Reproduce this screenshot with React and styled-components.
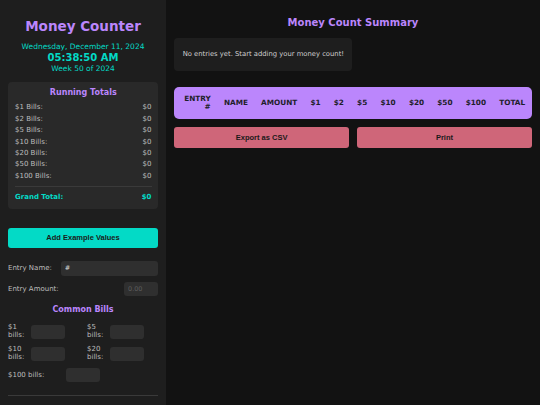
import React from "react"
import styled, { createGlobalStyle } from "styled-components"

const GlobalStyle = createGlobalStyle`
  html, body {
    margin: 0;
    padding: 0;
    background: #121212;
  }
  body {
    font-family: "DejaVu Sans", Verdana, sans-serif;
    color: #e0e0e0;
  }
  * {
    box-sizing: border-box;
  }
`

const Layout = styled.div`
  display: flex;
  width: 100%;
  height: 100vh;
  overflow: hidden;
`

const Sidebar = styled.aside`
  width: 166px;
  flex-shrink: 0;
  padding: 0 8px;
  background: #1e1e1e;
  overflow: hidden;
`

const AppTitle = styled.h1`
  margin: 18px 0 0;
  font-size: 13.5px;
  line-height: 16px;
  font-weight: bold;
  text-align: center;
  color: #bb86fc;
`

const ClockLine = styled.div`
  margin-top: ${(p) => p.$gap || 0}px;
  font-size: ${(p) => (p.$big ? "10px" : "7.5px")};
  font-weight: ${(p) => (p.$big ? "bold" : "normal")};
  line-height: 11px;
  text-align: center;
  color: #03dac6;
`

const TotalsBox = styled.section`
  margin-top: 7.8px;
  padding: 6px 6.5px 6.6px 7px;
  background: #292929;
  border-radius: 4px;
`

const SectionHeading = styled.h2`
  margin: ${(p) => p.$margin || "0 0 4.6px"};
  font-size: 8px;
  line-height: 10px;
  font-weight: bold;
  text-align: center;
  color: #bb86fc;
`

const TotalRow = styled.div`
  display: flex;
  justify-content: space-between;
  font-size: 7px;
  line-height: 11.4px;
  color: #bdbdbd;
`

const GrandRow = styled.div`
  display: flex;
  justify-content: space-between;
  padding-top: 5px;
  font-size: 7px;
  line-height: 10px;
  font-weight: bold;
  color: #03dac6;
`

const Divider = styled.hr`
  margin: ${(p) => p.$margin || "4px 0 0"};
  border: 0;
  border-top: 1px solid #3a3a3a;
`

const ActionButton = styled.button`
  display: block;
  width: 100%;
  height: ${(p) => p.$height || "20.3px"};
  margin-top: ${(p) => p.$top || 0}px;
  border: none;
  border-radius: 3px;
  background: ${(p) => p.$bg || "#03dac6"};
  color: #1a1a1a;
  font-family: "Liberation Sans", Arial, sans-serif;
  font-size: 7.5px;
  font-weight: bold;
`

const FieldRow = styled.div`
  display: flex;
  align-items: center;
  justify-content: ${(p) => (p.$spread ? "space-between" : "flex-start")};
  gap: 9px;
  margin-top: ${(p) => p.$top}px;
`

const FieldLabel = styled.label`
  font-size: 7px;
  line-height: 9px;
  color: #bdbdbd;
  white-space: nowrap;
`

const TextInput = styled.input`
  height: ${(p) => p.$height || "14.7px"};
  width: ${(p) => p.$width || "auto"};
  flex: ${(p) => (p.$grow ? 1 : "none")};
  min-width: 0;
  padding: 0 4px;
  border: none;
  border-radius: 3px;
  background: #2f2f2f;
  color: #dddddd;
  font-family: "DejaVu Sans", Verdana, sans-serif;
  font-size: 6.5px;
  outline: none;
  &::placeholder {
    color: #5c5c5c;
  }
`

const BillsGrid = styled.div`
  display: grid;
  grid-template-columns: 1fr 1fr;
  column-gap: 8px;
  row-gap: 7px;
  margin-top: 9px;
`

const BillItem = styled.div`
  display: grid;
  grid-template-columns: ${(p) => (p.$wide ? "54px" : "19px")} 34px;
  grid-column: ${(p) => (p.$wide ? "1 / -1" : "auto")};
  column-gap: 4px;
  align-items: center;
`

const BillLabel = styled.label`
  font-size: 7px;
  line-height: 7.6px;
  color: #bdbdbd;
`

const Main = styled.main`
  flex: 1;
  padding: 0 8.3px;
  background: #121212;
`

const SummaryTitle = styled.h2`
  margin: 17.3px 0 0;
  font-size: 10px;
  line-height: 12px;
  font-weight: bold;
  text-align: center;
  color: #bb86fc;
`

const EmptyBox = styled.div`
  width: fit-content;
  margin-top: 8.4px;
  padding: 12.5px 8.4px;
  background: #1e1e1e;
  border-radius: 4px;
  font-size: 6.8px;
  line-height: 8px;
  color: #cfcfcf;
`

const SummaryTable = styled.table`
  width: 100%;
  margin-top: 16.6px;
  border-collapse: separate;
  border-spacing: 0;
  background: #bb86fc;
  border-radius: 5px;
`

const HeadCell = styled.th`
  padding: 7.5px 6.6px;
  font-size: 7.3px;
  line-height: 8.4px;
  font-weight: bold;
  text-align: right;
  color: #1e1e2a;
  white-space: ${(p) => (p.$wrap ? "normal" : "nowrap")};
`

const ButtonRow = styled.div`
  display: grid;
  grid-template-columns: 1fr 1fr;
  gap: 8.3px;
  margin-top: 8.3px;
`

const billRows = ["$1", "$2", "$5", "$10", "$20", "$50", "$100"]
const headers = ["NAME", "AMOUNT", "$1", "$2", "$5", "$10", "$20", "$50", "$100", "TOTAL"]

const App = () => {
  return (
    <>
      <GlobalStyle />
      <Layout>
        <Sidebar>
          <AppTitle>Money Counter</AppTitle>
          <ClockLine $gap={7}>Wednesday, December 11, 2024</ClockLine>
          <ClockLine $big>05:38:50 AM</ClockLine>
          <ClockLine>Week 50 of 2024</ClockLine>

          <TotalsBox>
            <SectionHeading>Running Totals</SectionHeading>
            {billRows.map((bill) => (
              <TotalRow key={bill}>
                <span>{bill} Bills:</span>
                <span>$0</span>
              </TotalRow>
            ))}
            <Divider />
            <GrandRow>
              <span>Grand Total:</span>
              <span>$0</span>
            </GrandRow>
          </TotalsBox>

          <ActionButton $top={19}>Add Example Values</ActionButton>

          <FieldRow $top={12.7}>
            <FieldLabel>Entry Name:</FieldLabel>
            <TextInput $grow defaultValue="#" />
          </FieldRow>
          <FieldRow $top={6.3} $spread>
            <FieldLabel>Entry Amount:</FieldLabel>
            <TextInput $width="34px" placeholder="0.00" />
          </FieldRow>

          <SectionHeading $margin="8.6px 0 0">Common Bills</SectionHeading>
          <BillsGrid>
            <BillItem>
              <BillLabel>$1 bills:</BillLabel>
              <TextInput $height="14px" />
            </BillItem>
            <BillItem>
              <BillLabel>$5 bills:</BillLabel>
              <TextInput $height="14px" />
            </BillItem>
            <BillItem>
              <BillLabel>$10 bills:</BillLabel>
              <TextInput $height="14px" />
            </BillItem>
            <BillItem>
              <BillLabel>$20 bills:</BillLabel>
              <TextInput $height="14px" />
            </BillItem>
            <BillItem $wide>
              <BillLabel>$100 bills:</BillLabel>
              <TextInput $height="14px" />
            </BillItem>
          </BillsGrid>

          <Divider $margin="13px 0 0" />
          <SectionHeading $margin="9.5px 0 0">Coin Rolls</SectionHeading>
        </Sidebar>

        <Main>
          <SummaryTitle>Money Count Summary</SummaryTitle>
          <EmptyBox>No entries yet. Start adding your money count!</EmptyBox>
          <SummaryTable>
            <thead>
              <tr>
                <HeadCell $wrap>ENTRY #</HeadCell>
                {headers.map((h) => (
                  <HeadCell key={h}>{h}</HeadCell>
                ))}
              </tr>
            </thead>
          </SummaryTable>
          <ButtonRow>
            <ActionButton $bg="#cf6679" $height="20.7px">
              Export as CSV
            </ActionButton>
            <ActionButton $bg="#cf6679" $height="20.7px">
              Print
            </ActionButton>
          </ButtonRow>
        </Main>
      </Layout>
    </>
  )
}

export default App
